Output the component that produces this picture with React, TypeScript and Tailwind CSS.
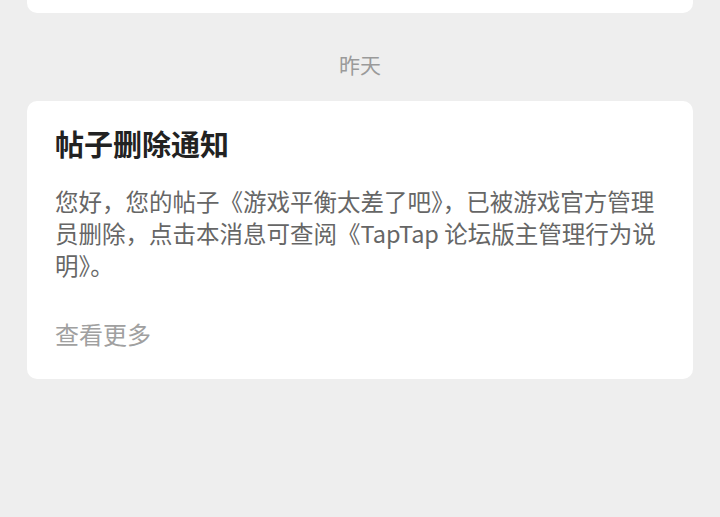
import React from "react";

export default function App() {
  return (
    <div
      className="w-[720px] h-[517px] bg-[#eeeeee] overflow-hidden"
      style={{ fontFamily: '"Noto Sans CJK SC", "Noto Sans", sans-serif' }}
    >
      <div className="mx-[27px] h-[13px] bg-white rounded-b-[10px]" />
      <div className="mt-[37px] mb-[23px] text-center text-[21px] leading-[28px] text-[#9a9a9a]">
        昨天
      </div>
      <div className="mx-[27px] bg-white rounded-[10px] pl-[28px] pr-[20px] pt-[22px] pb-[29px]">
        <div className="text-[29px] leading-[40px] font-bold text-[#222222]">帖子删除通知</div>
        <div className="mt-[22px] text-[23.5px] leading-[32px] text-[#666666]">
          您好，您的帖子《游戏平衡太差了吧》，已被游戏官方管理员删除，点击本消息可查阅《TapTap 论坛版主管理行为说明》。
        </div>
        <div className="mt-[37px] text-[24px] leading-[32px] text-[#a0a0a0]">查看更多</div>
      </div>
    </div>
  );
}
